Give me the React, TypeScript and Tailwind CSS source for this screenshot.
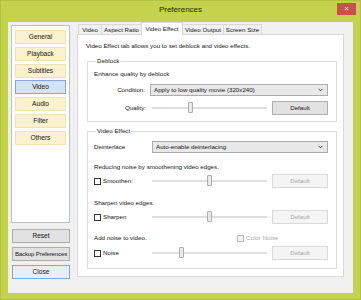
import React from "react";

function Chevron() {
  return (
    <svg width="5" height="4" viewBox="0 0 5 4" className="shrink-0">
      <path d="M0.5 0.8 L2.5 2.8 L4.5 0.8" fill="none" stroke="#333" strokeWidth="0.9" />
    </svg>
  );
}

function Select({ text, w, ml }: { text: string; w: string; ml: string }) {
  return (
    <div
      className={`${w} ${ml} h-[12px] bg-[#e8e8e8] border border-[#acacac] flex items-center justify-between pl-[3px] pr-[4px]`}
    >
      <span className="whitespace-nowrap">{text}</span>
      <Chevron />
    </div>
  );
}

function Slider({ thumb }: { thumb: string }) {
  return (
    <div className="relative w-[115px] h-[14px] flex items-center">
      <div className="w-full h-[2px] bg-[#dedede]" />
      <div
        className={`absolute top-[1px] ${thumb} w-[5px] h-[11px] bg-[#e9e9e9] border border-[#aeaeae] rounded-[1px]`}
      />
    </div>
  );
}

function DefBtn({ disabled }: { disabled?: boolean }) {
  return (
    <div
      className={
        disabled
          ? "ml-[5px] w-[56px] h-[14px] bg-[#f4f4f4] border border-[#d9d9d9] text-[#a6a6a6] flex items-center justify-center"
          : "ml-[5px] w-[56px] h-[14px] bg-[#e1e1e1] border border-[#adadad] flex items-center justify-center"
      }
    >
      Default
    </div>
  );
}

function Check({ disabled }: { disabled?: boolean }) {
  return (
    <div
      className={
        disabled
          ? "w-[7px] h-[7px] border border-[#bcbcbc] bg-[#f2f2f2] shrink-0"
          : "w-[7px] h-[7px] border border-[#333333] bg-white shrink-0"
      }
    />
  );
}

function CheckRow({ label, thumb }: { label: string; thumb: string }) {
  return (
    <div className="flex items-center h-[14px]">
      <div className="w-[58px] flex items-center">
        <Check />
        <span className="ml-[2px] whitespace-nowrap">{label}</span>
      </div>
      <Slider thumb={thumb} />
      <DefBtn disabled />
    </div>
  );
}

const sideItems = ["General", "Playback", "Subtitles", "Video", "Audio", "Filter", "Others"];
const tabs = [
  { t: "Video", w: "w-[24px]" },
  { t: "Aspect Ratio", w: "w-[41px]" },
  { t: "Video Effect", w: "w-[42px]", sel: true },
  { t: "Video Output", w: "w-[42px]" },
  { t: "Screen Size", w: "w-[39px]" },
];

export default function App() {
  return (
    <div className="w-[361px] h-[300px] bg-[#c4d24c] border border-[#b2c13f] flex flex-col font-['Liberation_Sans',Arial,sans-serif] text-[6.2px] leading-[8px] text-[#141414]">
      {/* title bar */}
      <div className="h-[21px] grid grid-cols-[1fr_auto_1fr] shrink-0">
        <div />
        <div className="text-[8px] leading-[18px] text-[#222]">Preferences</div>
        <div className="flex justify-end items-start">
          <div className="mt-[2px] mr-[4px] w-[19px] h-[12px] bg-[#c75050] text-white flex items-center justify-center text-[8px] leading-[8px]">
            ×
          </div>
        </div>
      </div>

      {/* client area */}
      <div className="flex-1 mx-[7px] mb-[6px] bg-[#f0f0f0] flex">
        {/* left column */}
        <div className="ml-[3px] mt-[3px] flex flex-col text-[6.6px]">
          <div className="w-[59px] h-[198px] bg-white border border-[#b7c1cc] pt-[4px] px-[3px] flex flex-col gap-[2.75px]">
            {sideItems.map((s) => (
              <div
                key={s}
                className={
                  s === "Video"
                    ? "h-[14px] bg-[#d3e2f6] border border-[#80a7d8] flex items-center justify-center"
                    : "h-[14px] bg-[#fcf1cd] border border-[#f1e2b6] flex items-center justify-center"
                }
              >
                {s}
              </div>
            ))}
          </div>
          <div className="mt-[6px] ml-[1px] w-[58px] flex flex-col gap-[4px]">
            <div className="h-[14px] bg-[#e1e1e1] border border-[#adadad] flex items-center justify-center">Reset</div>
            <div className="h-[14px] bg-[#e1e1e1] border border-[#adadad] flex items-center justify-center whitespace-nowrap text-[6px] tracking-[-0.1px]">
              Backup Preferences
            </div>
            <div className="h-[14px] bg-[#e8eef5] border border-[#7ea9d6] flex items-center justify-center">Close</div>
          </div>
        </div>

        {/* right column */}
        <div className="ml-[7px] flex flex-col">
          <div className="h-[12px] flex items-end pl-[1px]">
            {tabs.map((tb, i) =>
              tb.sel ? (
                <div
                  key={tb.t}
                  className={`${tb.w} relative h-[13px] mb-[-1px] -ml-px bg-white border border-b-0 border-[#d9d9d9] flex items-center justify-center whitespace-nowrap`}
                >
                  {tb.t}
                </div>
              ) : (
                <div
                  key={tb.t}
                  className={`${tb.w} h-[10px] ${i > 0 ? "-ml-px" : ""} bg-[#f0f0f0] border border-b-0 border-[#d9d9d9] flex items-center justify-center whitespace-nowrap`}
                >
                  {tb.t}
                </div>
              )
            )}
          </div>
          <div className="w-[267px] h-[243px] bg-white border border-[#d9d9d9] pt-[7px] flex flex-col">
            <div className="ml-[8px] h-[8px] whitespace-nowrap">
              Video Effect tab allows you to set deblock and video effects.
            </div>

            {/* Deblock */}
            <fieldset className="mt-[7px] ml-[9px] w-[250px] border border-[#dcdcdc] pl-[6px] pb-[6px]">
              <legend className="ml-[2px] px-[1px] h-[8px]">Deblock</legend>
              <div className="mt-[5px] h-[8px]">Enhance quality by deblock</div>
              <div className="mt-[6px] flex items-center">
                <div className="w-[51px] text-right">Condition:</div>
                <Select text="Apply to low quality movie (320x240)" w="w-[178px]" ml="ml-[5px]" />
              </div>
              <div className="mt-[5px] flex items-center h-[14px]">
                <div className="w-[52px] text-right mr-[6px]">Quality:</div>
                <Slider thumb="left-[35.5px]" />
                <DefBtn />
              </div>
            </fieldset>

            {/* Video Effect */}
            <fieldset className="mt-[5px] ml-[9px] w-[250px] border border-[#dcdcdc] pl-[6px] pb-[8px]">
              <legend className="ml-[2px] px-[1px] h-[8px]">Video Effect</legend>
              <div className="mt-[6px] flex items-center">
                <div className="w-[58px]">Deinterlace</div>
                <Select text="Auto-enable deinterlacing" w="w-[176px]" ml="ml-0" />
              </div>
              <div className="mt-[10px] h-[8px]">Reducing noise by smoothening video edges.</div>
              <div className="mt-[3px]">
                <CheckRow label="Smoothen:" thumb="left-[55px]" />
              </div>
              <div className="mt-[11px] h-[8px]">Sharpen video edges.</div>
              <div className="mt-[3px]">
                <CheckRow label="Sharpen" thumb="left-[55px]" />
              </div>
              <div className="mt-[10px] h-[8px] flex items-center">
                <div className="w-[143px]">Add noise to video.</div>
                <Check disabled />
                <span className="ml-[2px] text-[#a6a6a6]">Color Noise</span>
              </div>
              <div className="mt-[4px]">
                <CheckRow label="Noise" thumb="left-[26.5px]" />
              </div>
            </fieldset>
          </div>
        </div>
      </div>
    </div>
  );
}
